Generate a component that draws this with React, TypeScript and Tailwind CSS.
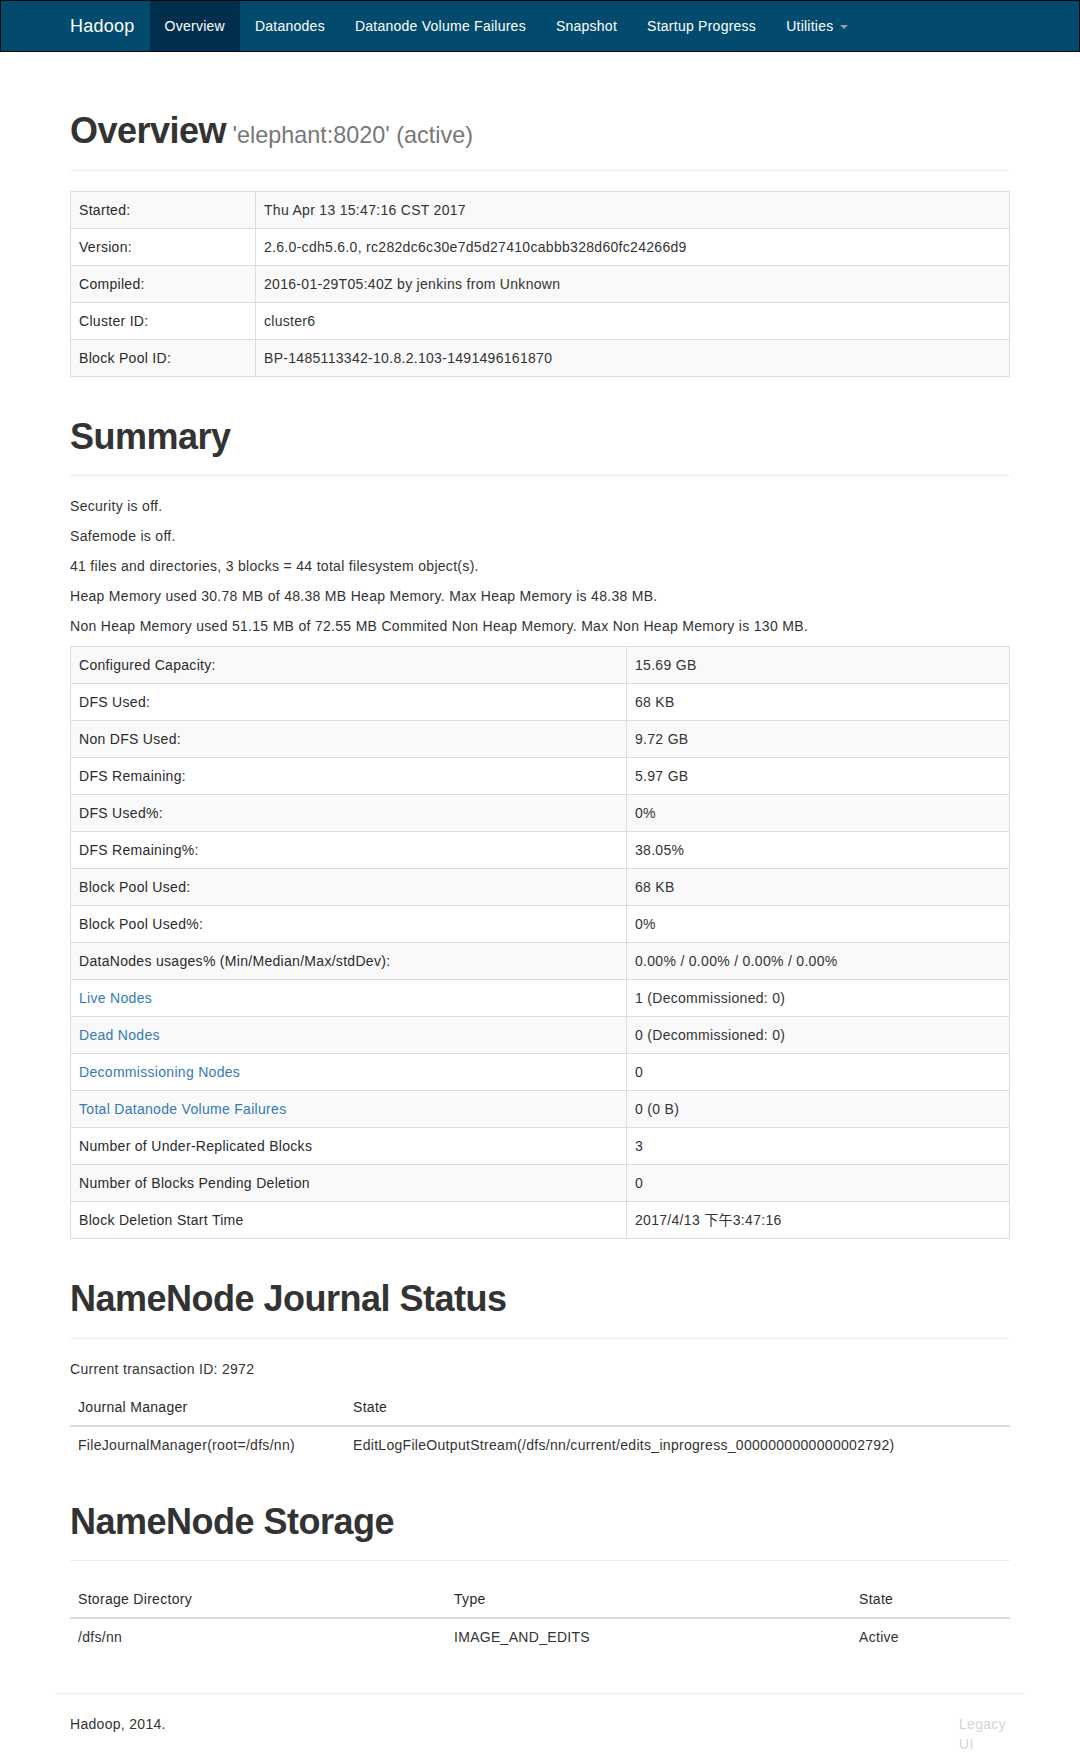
import React from 'react';

type Row = { label: React.ReactNode; value: React.ReactNode };

const link = (text: string) => <a className="text-[#337ab7]">{text}</a>;

const overviewRows: Row[] = [
  { label: 'Started:', value: 'Thu Apr 13 15:47:16 CST 2017' },
  { label: 'Version:', value: '2.6.0-cdh5.6.0, rc282dc6c30e7d5d27410cabbb328d60fc24266d9' },
  { label: 'Compiled:', value: '2016-01-29T05:40Z by jenkins from Unknown' },
  { label: 'Cluster ID:', value: 'cluster6' },
  { label: 'Block Pool ID:', value: 'BP-1485113342-10.8.2.103-1491496161870' },
];

const summaryRows: Row[] = [
  { label: 'Configured Capacity:', value: '15.69 GB' },
  { label: 'DFS Used:', value: '68 KB' },
  { label: 'Non DFS Used:', value: '9.72 GB' },
  { label: 'DFS Remaining:', value: '5.97 GB' },
  { label: 'DFS Used%:', value: '0%' },
  { label: 'DFS Remaining%:', value: '38.05%' },
  { label: 'Block Pool Used:', value: '68 KB' },
  { label: 'Block Pool Used%:', value: '0%' },
  { label: 'DataNodes usages% (Min/Median/Max/stdDev):', value: '0.00% / 0.00% / 0.00% / 0.00%' },
  { label: link('Live Nodes'), value: '1 (Decommissioned: 0)' },
  { label: link('Dead Nodes'), value: '0 (Decommissioned: 0)' },
  { label: link('Decommissioning Nodes'), value: '0' },
  { label: link('Total Datanode Volume Failures'), value: '0 (0 B)' },
  { label: 'Number of Under-Replicated Blocks', value: '3' },
  { label: 'Number of Blocks Pending Deletion', value: '0' },
  { label: 'Block Deletion Start Time', value: '2017/4/13 下午3:47:16' },
];

const summaryLines = [
  'Security is off.',
  'Safemode is off.',
  '41 files and directories, 3 blocks = 44 total filesystem object(s).',
  'Heap Memory used 30.78 MB of 48.38 MB Heap Memory. Max Heap Memory is 48.38 MB.',
  'Non Heap Memory used 51.15 MB of 72.55 MB Commited Non Heap Memory. Max Non Heap Memory is 130 MB.',
];

const navItems = ['Overview', 'Datanodes', 'Datanode Volume Failures', 'Snapshot', 'Startup Progress'];

const NavBar = () => (
  <nav className="h-[52px] border border-[#080808] bg-[#024b6e] tracking-[0.25px]">
    <div className="mx-auto flex w-[970px] px-[15px]">
      <a className="-ml-[15px] h-[50px] px-[15px] py-[15px] text-[18px] leading-5 text-white">Hadoop</a>
      {navItems.map((item, i) => (
        <a
          key={item}
          className={`h-[50px] px-[15px] py-[15px] leading-5 text-white ${i === 0 ? 'bg-[#002f4e]' : ''}`}
        >
          {item}
        </a>
      ))}
      <a className="flex h-[50px] items-center px-[15px] py-[15px] leading-5 text-white">
        Utilities
        <span className="ml-[6px] mt-[1px] h-0 w-0 border-x-4 border-t-4 border-x-transparent border-t-[#9d9d9d]" />
      </a>
    </div>
  </nav>
);

const PageHeader = ({ title, sub, top }: { title: string; sub?: string; top: string }) => (
  <div className={`${top} mb-5 border-b border-[#eeeeee] pb-[9px]`}>
    <h1 className="mb-[10px] text-[36px] leading-[1.1] font-bold tracking-[-0.5px] text-[#333333]">
      {title}
      {sub && (
        <small className="text-[23.4px] leading-none font-normal tracking-normal text-[#777777]"> {sub}</small>
      )}
    </h1>
  </div>
);

const InfoTable = ({ rows, labelWidth }: { rows: Row[]; labelWidth: string }) => (
  <table className="w-full table-fixed border-collapse border border-[#dddddd]">
    <colgroup>
      <col className={labelWidth} />
      <col />
    </colgroup>
    <tbody>
      {rows.map((row, i) => (
        <tr key={i} className={i % 2 === 0 ? 'bg-[#f9f9f9]' : 'bg-white'}>
          <th className="border border-[#dddddd] p-2 text-left align-top leading-5 font-normal text-[#2a2a2a]">
            {row.label}
          </th>
          <td className="border border-[#dddddd] p-2 align-top leading-5">{row.value}</td>
        </tr>
      ))}
    </tbody>
  </table>
);

const PlainTable = ({ head, row, widths }: { head: string[]; row: string[]; widths: string[] }) => (
  <table className="w-full table-fixed border-collapse">
    <colgroup>
      {widths.map((w, i) => (
        <col key={i} className={w} />
      ))}
    </colgroup>
    <thead>
      <tr>
        {head.map((h) => (
          <th
            key={h}
            className="border-b-2 border-[#dddddd] p-2 text-left align-bottom leading-5 font-normal text-[#2a2a2a]"
          >
            {h}
          </th>
        ))}
      </tr>
    </thead>
    <tbody>
      <tr>
        {row.map((c) => (
          <td key={c} className="border-t border-[#dddddd] p-2 align-top leading-5">
            {c}
          </td>
        ))}
      </tr>
    </tbody>
  </table>
);

export default function App() {
  return (
    <div className="h-[1755px] overflow-hidden bg-white font-['Liberation_Sans','Noto_Sans_CJK_SC',sans-serif] text-[14px] leading-5 tracking-[0.3px] text-[#333333]">
      <NavBar />

      <div className="mx-auto w-[940px]">
        <PageHeader title="Overview" sub="'elephant:8020' (active)" top="mt-[59px]" />
        <InfoTable rows={overviewRows} labelWidth="w-[185px]" />

        <PageHeader title="Summary" top="mt-10" />
        {summaryLines.map((line) => (
          <p key={line} className="mb-[10px]">
            {line}
          </p>
        ))}
        <InfoTable rows={summaryRows} labelWidth="w-[556px]" />

        <PageHeader title="NameNode Journal Status" top="mt-10" />
        <p className="mb-[10px]">Current transaction ID: 2972</p>
        <PlainTable
          head={['Journal Manager', 'State']}
          row={[
            'FileJournalManager(root=/dfs/nn)',
            'EditLogFileOutputStream(/dfs/nn/current/edits_inprogress_0000000000000002792)',
          ]}
          widths={['w-[275px]', '']}
        />

        <PageHeader title="NameNode Storage" top="mt-[39px]" />
        <PlainTable
          head={['Storage Directory', 'Type', 'State']}
          row={['/dfs/nn', 'IMAGE_AND_EDITS', 'Active']}
          widths={['w-[376px]', 'w-[405px]', '']}
        />
      </div>

      <footer className="mx-auto mt-[38px] w-[970px]">
        <hr className="mb-5 border-t border-[#eeeeee]" />
        <div className="flex justify-between px-[15px]">
          <p>Hadoop, 2014.</p>
          <p className="w-[51px] text-[#d5d5d5]">Legacy UI</p>
        </div>
      </footer>
    </div>
  );
}
